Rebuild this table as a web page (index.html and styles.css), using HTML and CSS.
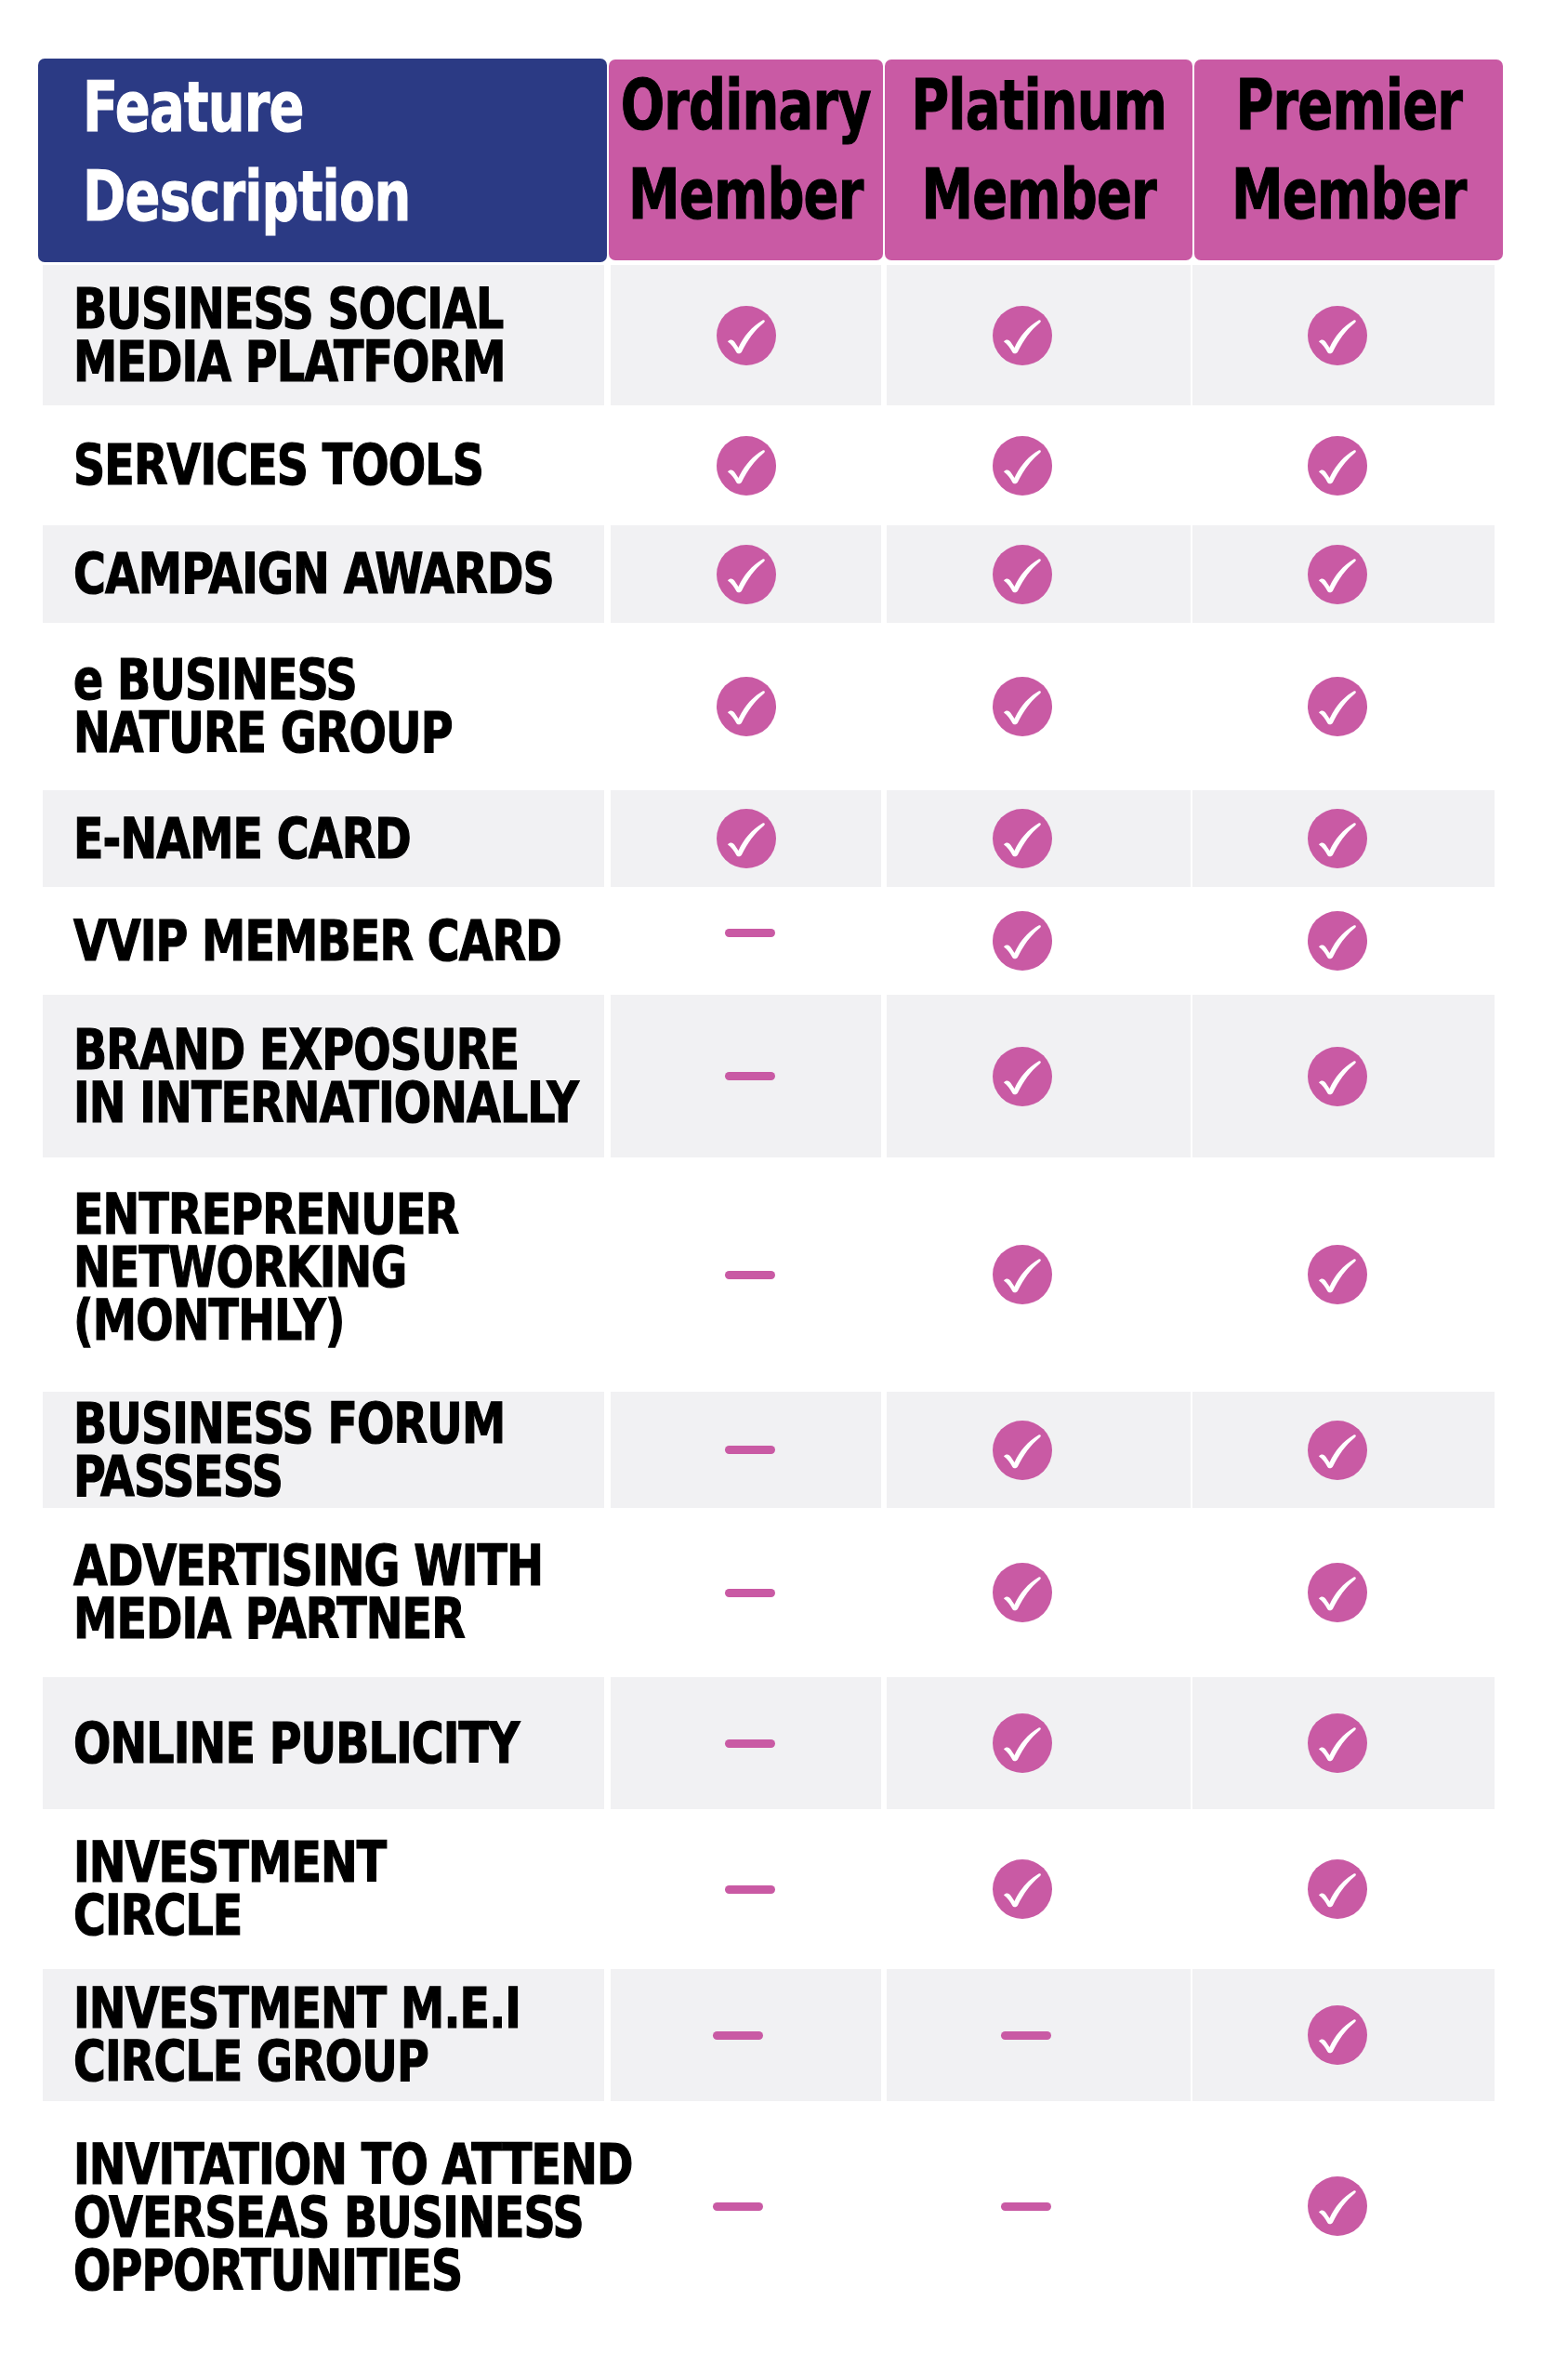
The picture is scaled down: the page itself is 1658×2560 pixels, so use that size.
FILE: index.html
```html
<!DOCTYPE html>
<html lang="en">
<head>
<meta charset="utf-8">
<title>Membership Features</title>
<link rel="stylesheet" href="styles.css">
</head>
<body>
<svg width="0" height="0" class="defs" aria-hidden="true">
  <symbol id="check" viewBox="0 0 64 64">
    <circle cx="32" cy="32" r="32" fill="#c95aa4"/>
    <path fill="#fff" d="M12 38.5 C14.5 35.5 18 36 20.5 40.5 L23.5 45 C29 33 38 22 49.5 15.5 C51.5 14.5 52.8 16.5 51 18 C41 26 33 37 27 49.5 C25.8 51.8 22.5 52 21.2 49.7 C18.8 45 16 41.5 12 38.5 Z"/>
  </symbol>
</svg>
<main class="table">
  <div class="row">
    <div class="head feat-head"><span class="t">Feature<br>Description</span></div>
    <div class="head tier"><span class="t">Ordinary<br>Member</span></div>
    <div class="head tier"><span class="t">Platinum<br>Member</span></div>
    <div class="head tier"><span class="t">Premier<br>Member</span></div>
  </div>

  <div class="row alt">
    <div class="cell feat"><span class="t">BUSINESS SOCIAL<br>MEDIA PLATFORM</span></div>
    <div class="cell ord"><svg class="ck"><use href="#check"/></svg></div>
    <div class="cell plat"><svg class="ck"><use href="#check"/></svg></div>
    <div class="cell prem"><svg class="ck"><use href="#check"/></svg></div>
  </div>
  <div class="row">
    <div class="cell feat"><span class="t">SERVICES TOOLS</span></div>
    <div class="cell ord"><svg class="ck"><use href="#check"/></svg></div>
    <div class="cell plat"><svg class="ck"><use href="#check"/></svg></div>
    <div class="cell prem"><svg class="ck"><use href="#check"/></svg></div>
  </div>
  <div class="row alt">
    <div class="cell feat"><span class="t">CAMPAIGN AWARDS</span></div>
    <div class="cell ord"><svg class="ck"><use href="#check"/></svg></div>
    <div class="cell plat"><svg class="ck"><use href="#check"/></svg></div>
    <div class="cell prem"><svg class="ck"><use href="#check"/></svg></div>
  </div>
  <div class="row">
    <div class="cell feat"><span class="t">e BUSINESS<br>NATURE GROUP</span></div>
    <div class="cell ord"><svg class="ck"><use href="#check"/></svg></div>
    <div class="cell plat"><svg class="ck"><use href="#check"/></svg></div>
    <div class="cell prem"><svg class="ck"><use href="#check"/></svg></div>
  </div>
  <div class="row alt">
    <div class="cell feat"><span class="t">E-NAME CARD</span></div>
    <div class="cell ord"><svg class="ck"><use href="#check"/></svg></div>
    <div class="cell plat"><svg class="ck"><use href="#check"/></svg></div>
    <div class="cell prem"><svg class="ck"><use href="#check"/></svg></div>
  </div>
  <div class="row">
    <div class="cell feat"><span class="t">VVIP MEMBER CARD</span></div>
    <div class="cell ord"><span class="dash dash-up"></span></div>
    <div class="cell plat"><svg class="ck"><use href="#check"/></svg></div>
    <div class="cell prem"><svg class="ck"><use href="#check"/></svg></div>
  </div>
  <div class="row alt">
    <div class="cell feat"><span class="t">BRAND EXPOSURE<br>IN INTERNATIONALLY</span></div>
    <div class="cell ord"><span class="dash"></span></div>
    <div class="cell plat"><svg class="ck"><use href="#check"/></svg></div>
    <div class="cell prem"><svg class="ck"><use href="#check"/></svg></div>
  </div>
  <div class="row">
    <div class="cell feat raise"><span class="t">ENTREPRENUER<br>NETWORKING<br>(MONTHLY)</span></div>
    <div class="cell ord"><span class="dash"></span></div>
    <div class="cell plat"><svg class="ck"><use href="#check"/></svg></div>
    <div class="cell prem"><svg class="ck"><use href="#check"/></svg></div>
  </div>
  <div class="row alt">
    <div class="cell feat"><span class="t">BUSINESS FORUM<br>PASSESS</span></div>
    <div class="cell ord"><span class="dash"></span></div>
    <div class="cell plat"><svg class="ck"><use href="#check"/></svg></div>
    <div class="cell prem"><svg class="ck"><use href="#check"/></svg></div>
  </div>
  <div class="row">
    <div class="cell feat"><span class="t">ADVERTISING WITH<br>MEDIA PARTNER</span></div>
    <div class="cell ord"><span class="dash"></span></div>
    <div class="cell plat"><svg class="ck"><use href="#check"/></svg></div>
    <div class="cell prem"><svg class="ck"><use href="#check"/></svg></div>
  </div>
  <div class="row alt">
    <div class="cell feat"><span class="t">ONLINE PUBLICITY</span></div>
    <div class="cell ord"><span class="dash"></span></div>
    <div class="cell plat"><svg class="ck"><use href="#check"/></svg></div>
    <div class="cell prem"><svg class="ck"><use href="#check"/></svg></div>
  </div>
  <div class="row">
    <div class="cell feat"><span class="t">INVESTMENT<br>CIRCLE</span></div>
    <div class="cell ord"><span class="dash"></span></div>
    <div class="cell plat"><svg class="ck"><use href="#check"/></svg></div>
    <div class="cell prem"><svg class="ck"><use href="#check"/></svg></div>
  </div>
  <div class="row alt">
    <div class="cell feat"><span class="t">INVESTMENT M.E.I<br>CIRCLE GROUP</span></div>
    <div class="cell ord shift"><span class="dash"></span></div>
    <div class="cell plat"><span class="dash"></span></div>
    <div class="cell prem"><svg class="ck"><use href="#check"/></svg></div>
  </div>
  <div class="row last">
    <div class="cell feat"><span class="t">INVITATION TO ATTEND<br>OVERSEAS BUSINESS<br>OPPORTUNITIES</span></div>
    <div class="cell ord shift"><span class="dash"></span></div>
    <div class="cell plat"><span class="dash"></span></div>
    <div class="cell prem"><svg class="ck"><use href="#check"/></svg></div>
  </div>
</main>
</body>
</html>
```

FILE: styles.css
```css
html, body {
  margin: 0;
  padding: 0;
  background: #ffffff;
}

body {
  font-family: "DejaVu Sans Condensed", "DejaVu Sans", sans-serif;
  font-stretch: condensed;
  font-weight: 700;
  color: #000;
}

.defs {
  position: absolute;
  width: 0;
  height: 0;
}

.table {
  display: grid;
  grid-template-columns: 612px 295px 331px 332px;
  grid-template-rows: 222px 151px 129px 105px 180px 104px 116px 175px 252px 125px 182px 142px 172px 142px 250px;
  column-gap: 2px;
  padding: 63px 0 50px 41px;
}

.row {
  display: contents;
}

.t {
  display: inline-block;
  white-space: nowrap;
}

.head {
  font-size: 74px;
  line-height: 96px;
  letter-spacing: -1px;
  align-self: start;
  box-sizing: border-box;
  border-radius: 7px;
}

.head .t {
  transform: scaleX(0.84);
}

.feat-head {
  height: 219px;
  background: #2b3a84;
  color: #fff;
  -webkit-text-stroke: 1px #fff;
  padding: 4px 0 0 48px;
}

.feat-head .t {
  transform-origin: left top;
}

.tier {
  height: 216px;
  margin-top: 1px;
  background: #c95aa4;
  color: #000;
  -webkit-text-stroke: 1px #000;
  display: flex;
  justify-content: center;
  align-items: flex-start;
  text-align: center;
  padding-top: 1px;
}

.tier .t {
  transform-origin: center top;
}

.cell {
  display: flex;
  align-items: center;
  justify-content: center;
  margin: 0 2px;
}

.row.alt .cell {
  background: #f1f1f3;
}

.feat {
  justify-content: flex-start;
  margin: 0 3px 0 5px;
  padding-left: 33px;
  font-size: 60px;
  line-height: 57px;
  letter-spacing: -1px;
  -webkit-text-stroke: 1.2px #000;
}

.feat .t {
  transform: scaleX(0.88);
  transform-origin: left center;
}

.feat.raise {
  padding-bottom: 16px;
}

.plat {
  padding-right: 36px;
}

.prem {
  margin: 0 9px 0 -2px;
  padding-right: 14px;
}

.shift {
  padding-right: 26px;
}

.row.last .ord,
.row.last .plat,
.row.last .prem {
  padding-bottom: 24px;
}

.ck {
  width: 64px;
  height: 64px;
  display: block;
}

.dash {
  display: block;
  width: 54px;
  height: 9px;
  border-radius: 5px;
  background: #c95aa4;
  margin-left: 8px;
}

.dash-up {
  margin-bottom: 18px;
}
```
